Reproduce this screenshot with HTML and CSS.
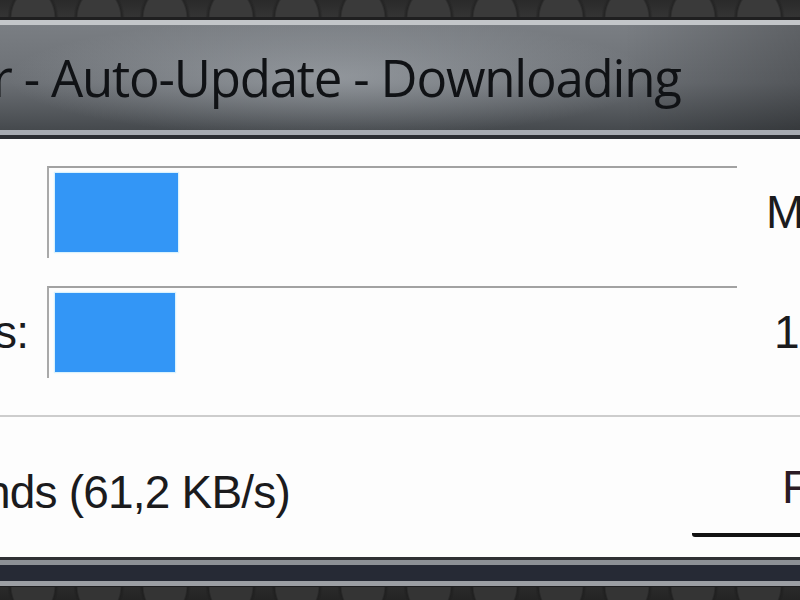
FILE: index.html
```html
<!DOCTYPE html>
<html lang="en">
<head>
<meta charset="utf-8">
<title>Auto-Update - Downloading</title>
<link rel="stylesheet" href="styles.css">
</head>
<body>
<div class="screen">
  <div class="tread tread-top"></div>
  <div class="window">
    <div class="titlebar"><span class="title">r - Auto-Update - Downloading</span></div>
    <div class="client">
      <div class="rows">
        <div class="label"></div>
        <div class="bar"><div class="fill" style="width:123px"></div></div>
        <div class="value">M</div>
        <div class="label">s:</div>
        <div class="bar"><div class="fill" style="width:120px"></div></div>
        <div class="value value-num">1</div>
      </div>
      <div class="sep"></div>
      <div class="status">
        <span class="status-text">nds (61,2 KB/s)</span>
        <div class="button">F</div>
      </div>
    </div>
    <div class="frame-bottom"></div>
  </div>
  <div class="tread tread-bottom"></div>
</div>
</body>
</html>
```
FILE: styles.css
```css
html, body {
  margin: 0;
  padding: 0;
  background: #2e2e2e;
}
.screen {
  width: 800px;
  height: 600px;
  overflow: hidden;
  display: flex;
  flex-direction: column;
}
.tread {
  background-color: #323232;
  background-image:
    radial-gradient(ellipse 30px 40px at 50% 110%, #3a3a3a 0 70%, #242424 76%, rgba(50, 50, 50, 0) 86%),
    linear-gradient(180deg, #2a2a2a, #343434);
  background-size: 66px 100%, 100% 100%;
}
.tread-top {
  height: 17px;
  flex: none;
}
.tread-bottom {
  height: 13px;
  flex: none;
  background-image:
    radial-gradient(ellipse 30px 40px at 50% -10%, #343434 0 70%, #202020 76%, rgba(50, 50, 50, 0) 86%),
    linear-gradient(180deg, #2a2a2a, #242424);
}
.window {
  flex: none;
  border-top: 3px solid #1f1f20;
  display: flex;
  flex-direction: column;
}
.titlebar {
  height: 105px;
  border-top: 5px solid #c3c6c9;
  border-bottom: 5px solid #a7abb2;
  background:
    radial-gradient(ellipse 430px 80px at 330px 50%, rgba(190, 196, 202, 0.45), rgba(190, 196, 202, 0) 75%),
    linear-gradient(90deg, rgba(0, 0, 0, 0) 78%, rgba(0, 0, 0, 0.22) 100%),
    linear-gradient(180deg, #7a7e83 0%, #6b6f74 55%, #45494d 100%);
  overflow: hidden;
  white-space: nowrap;
}
.title {
  display: block;
  margin-left: -8px;
  padding-top: 27px;
  font-family: "Open Sans", "Noto Sans", sans-serif;
  font-size: 51px;
  line-height: 50px;
  letter-spacing: -1.2px;
  color: #101215;
}
.client {
  height: 422px;
  border-top: 4px solid #2c2e33;
  background: #fdfdfd;
  font-family: "Liberation Sans", Arial, sans-serif;
  font-size: 46px;
  letter-spacing: -0.8px;
  color: #1b1b1d;
  box-sizing: border-box;
  display: flex;
  flex-direction: column;
  overflow: hidden;
}
.rows {
  padding-top: 27px;
  display: grid;
  grid-template-columns: 47px 690px 1fr;
  grid-template-rows: 92px 92px;
  row-gap: 28px;
  align-items: center;
}
.label {
  margin-left: -6px;
  white-space: nowrap;
  line-height: 46px;
}
.bar {
  height: 92px;
  box-sizing: border-box;
  border-top: 2px solid #a2a2a2;
  border-left: 2px solid #a9a9a9;
  padding: 5px 0 0 6px;
}
.fill {
  height: 79px;
  background: #3396f6;
  box-shadow: 0 0 1px 1px rgba(150, 220, 255, 0.35);
}
.value {
  padding-left: 29px;
  white-space: nowrap;
  line-height: 46px;
}
.value-num {
  padding-left: 37px;
}
.sep {
  margin-top: 37px;
  height: 2px;
  background: #cdcdcd;
  flex: none;
}
.status {
  display: flex;
  align-items: flex-start;
  flex: 1;
}
.status-text {
  margin-left: -15px;
  margin-top: 52px;
  line-height: 46px;
  white-space: nowrap;
}
.button {
  margin-left: auto;
  margin-top: 17px;
  width: 18px;
  height: 69px;
  padding: 30px 0 0 90px;
  border-bottom: 4px solid #121212;
  border-bottom-left-radius: 3px;
  white-space: nowrap;
  line-height: 46px;
  color: #2a1b24;
}
.frame-bottom {
  height: 30px;
  flex: none;
  background: linear-gradient(180deg,
    #2f3034 0px, #2f3034 3px,
    #8d9196 3px, #8d9196 8px,
    #262a35 8px, #262a35 24px,
    #9c9fa4 24px, #9c9fa4 29px,
    #1e1e20 29px, #1e1e20 30px);
}
```
